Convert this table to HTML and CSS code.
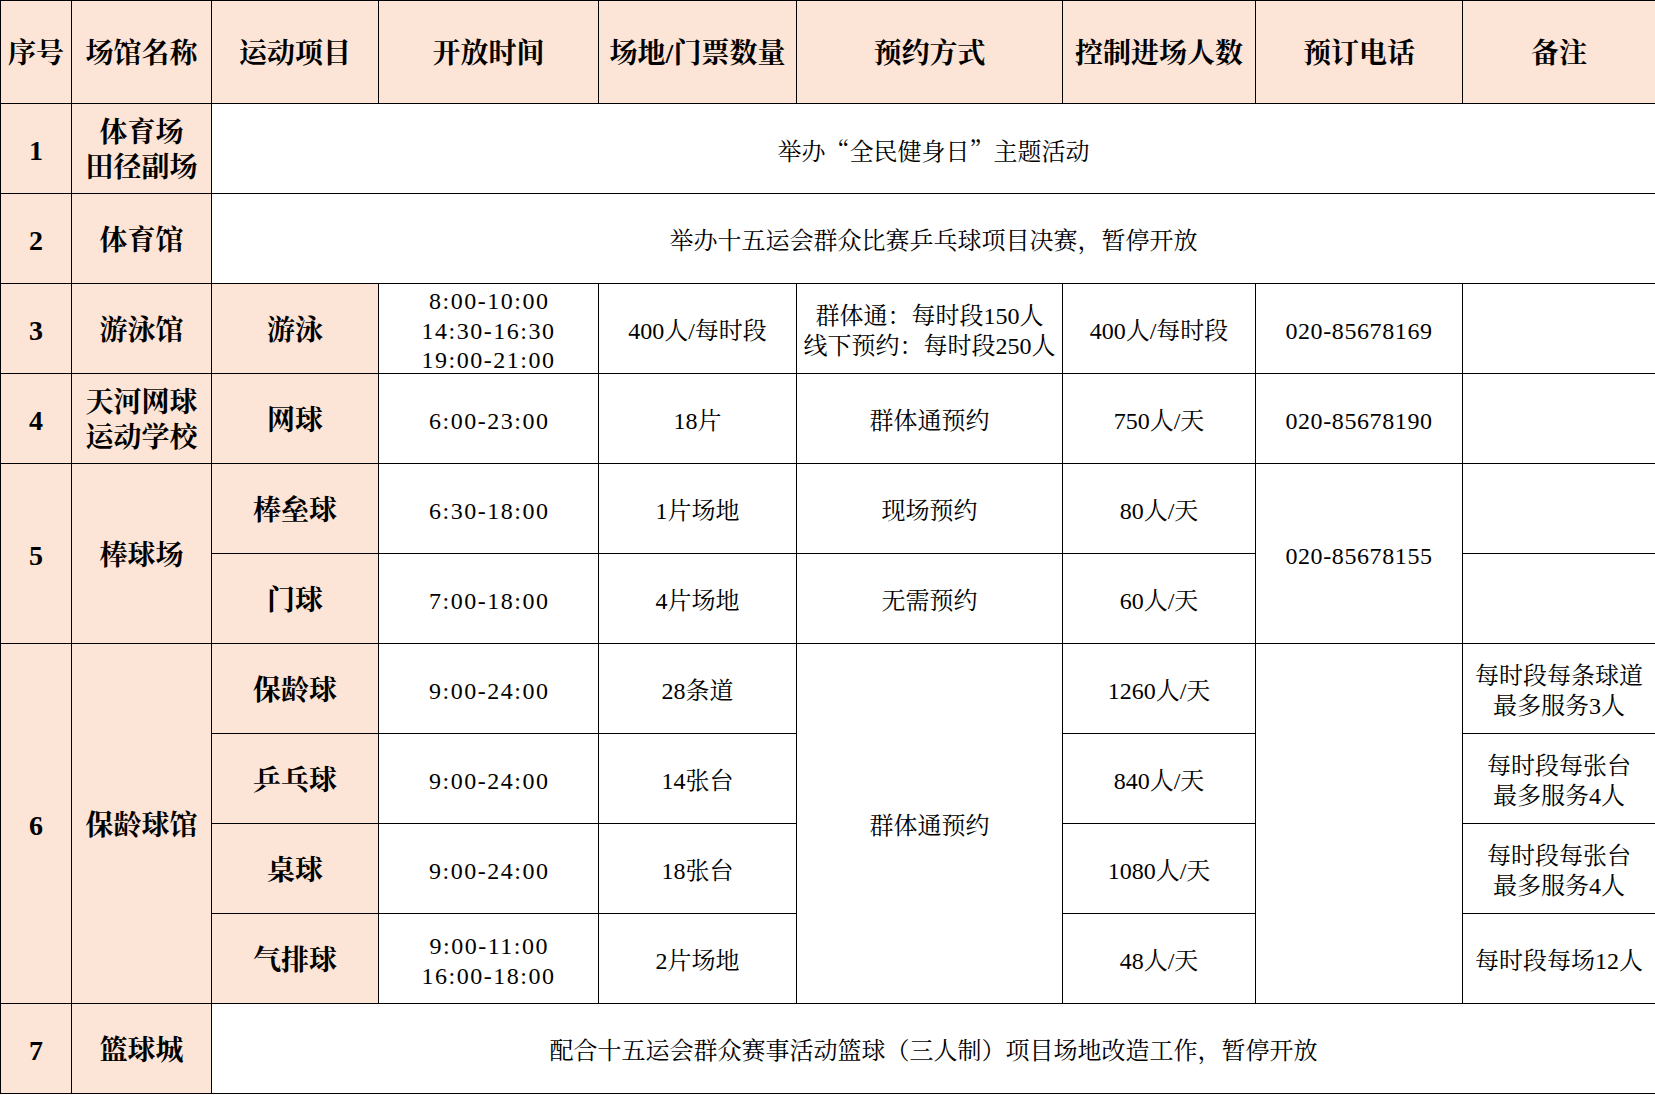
FILE: index.html
```html
<!DOCTYPE html>
<html lang="zh-CN">
<head>
<meta charset="utf-8">
<title>场馆开放安排</title>
<link rel="stylesheet" href="styles.css">
</head>
<body>
<table class="sheet">
  <colgroup>
    <col class="c-no"><col class="c-venue"><col class="c-sport"><col class="c-time"><col class="c-qty">
    <col class="c-way"><col class="c-limit"><col class="c-tel"><col class="c-note">
  </colgroup>
  <thead>
    <tr class="head">
      <th>序号</th><th>场馆名称</th><th>运动项目</th><th>开放时间</th><th>场地/门票数量</th>
      <th>预约方式</th><th>控制进场人数</th><th>预订电话</th><th>备注</th>
    </tr>
  </thead>
  <tbody>
    <tr>
      <td class="key num">1</td><td class="key">体育场<br>田径副场</td>
      <td colspan="7">举办<span class="cjk">“</span>全民健身日<span class="cjk">”</span>主题活动</td>
    </tr>
    <tr>
      <td class="key num">2</td><td class="key">体育馆</td>
      <td colspan="7">举办十五运会群众比赛乒乓球项目决赛，暂停开放</td>
    </tr>
    <tr>
      <td class="key num">3</td><td class="key">游泳馆</td><td class="key">游泳</td>
      <td class="t t3"><div class="lines">8:00-10:00<br>14:30-16:30<br>19:00-21:00</div></td>
      <td>400人/每时段</td>
      <td>群体通：每时段150人<br>线下预约：每时段250人</td>
      <td>400人/每时段</td><td class="tel">020-85678169</td><td></td>
    </tr>
    <tr>
      <td class="key num">4</td><td class="key">天河网球<br>运动学校</td><td class="key">网球</td>
      <td class="t">6:00-23:00</td><td>18片</td><td>群体通预约</td><td>750人/天</td><td class="tel">020-85678190</td><td></td>
    </tr>
    <tr>
      <td class="key num" rowspan="2">5</td><td class="key" rowspan="2">棒球场</td><td class="key">棒垒球</td>
      <td class="t">6:30-18:00</td><td>1片场地</td><td>现场预约</td><td>80人/天</td>
      <td class="tel" rowspan="2">020-85678155</td><td></td>
    </tr>
    <tr>
      <td class="key">门球</td>
      <td class="t">7:00-18:00</td><td>4片场地</td><td>无需预约</td><td>60人/天</td><td></td>
    </tr>
    <tr>
      <td class="key num" rowspan="4">6</td><td class="key" rowspan="4">保龄球馆</td><td class="key">保龄球</td>
      <td class="t">9:00-24:00</td><td>28条道</td><td rowspan="4">群体通预约</td><td>1260人/天</td>
      <td rowspan="4"></td><td>每时段每条球道<br>最多服务3人</td>
    </tr>
    <tr>
      <td class="key">乒乓球</td>
      <td class="t">9:00-24:00</td><td>14张台</td><td>840人/天</td><td>每时段每张台<br>最多服务4人</td>
    </tr>
    <tr>
      <td class="key">桌球</td>
      <td class="t">9:00-24:00</td><td>18张台</td><td>1080人/天</td><td>每时段每张台<br>最多服务4人</td>
    </tr>
    <tr>
      <td class="key">气排球</td>
      <td class="t">9:00-11:00<br>16:00-18:00</td><td>2片场地</td><td>48人/天</td><td>每时段每场12人</td>
    </tr>
    <tr>
      <td class="key num">7</td><td class="key">篮球城</td>
      <td colspan="7">配合十五运会群众赛事活动篮球（三人制）项目场地改造工作，暂停开放</td>
    </tr>
  </tbody>
</table>
</body>
</html>
```

FILE: styles.css
```css
html, body {
  margin: 0;
  padding: 0;
  background: #ffffff;
}

.sheet {
  border-collapse: collapse;
  table-layout: fixed;
  width: 1655px;
  font-family: "Liberation Serif", "Noto Serif CJK SC", "Noto Sans CJK SC", serif;
  color: #000;
}

.c-no { width: 71px; }
.c-venue { width: 140px; }
.c-sport { width: 167px; }
.c-time { width: 220px; }
.c-qty { width: 198px; }
.c-way { width: 266px; }
.c-limit { width: 193px; }
.c-tel { width: 207px; }
.c-note { width: 193px; }

.sheet th,
.sheet td {
  border: 1px solid #000;
  padding: 0;
  text-align: center;
  vertical-align: middle;
  white-space: nowrap;
}

.head th {
  height: 103px;
  padding-top: 5px;
  box-sizing: border-box;
  background: #fce4d6;
  font-size: 28px;
  font-weight: 700;
  line-height: 1.24;
}

.sheet tbody tr {
  height: 90px;
}

.sheet td {
  padding-top: 6px;
  font-size: 24px;
  font-weight: 400;
  line-height: 29.5px;
  color: #000;
}

.sheet td.key {
  padding-top: 3px;
  background: #fce4d6;
  font-size: 28px;
  font-weight: 700;
  line-height: 35px;
}

.sheet td.num {
  font-size: 28px;
}

.sheet td.t {
  letter-spacing: 1.5px;
  text-indent: 1.5px;
}

.sheet td.t3 {
  padding-top: 0;
}

.lines {
  margin-top: 3px;
  margin-bottom: -3px;
  line-height: 29.5px;
}

.sheet td.tel {
  letter-spacing: 0.6px;
}

.cjk {
  font-family: "Noto Serif CJK SC", "Noto Sans CJK SC", serif;
}
```
